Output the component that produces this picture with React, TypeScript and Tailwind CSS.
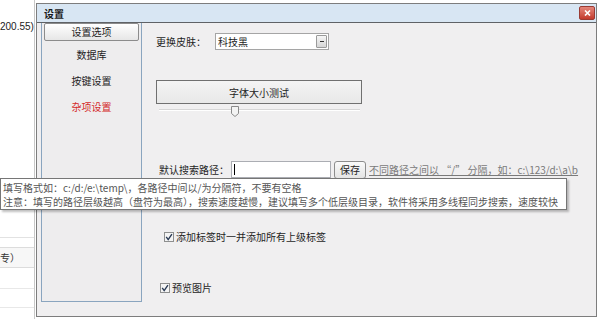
import React from "react";

function Check() {
  return (
    <svg width="10" height="10" viewBox="0 0 10 10" className="block">
      <rect x="0.5" y="0.5" width="9" height="9" fill="#f4f4f4" stroke="#8e8f8f" />
      <path d="M2.2 4.8 L4.2 7.6 L7.9 2.2" fill="none" stroke="#2a3a55" strokeWidth="1.4" />
    </svg>
  );
}

export default function App() {
  return (
    <div className="relative w-[600px] h-[319px] overflow-hidden bg-white font-['Noto_Sans_CJK_SC',sans-serif] text-[10px] text-[#1e1e1e]">
      {/* background page */}
      <div className="absolute left-0 top-[20px] text-[10px] leading-[14px] text-[#222] font-['Liberation_Sans',sans-serif]">200.55)</div>
      <div className="absolute left-0 top-[237px] w-[35px] border-t border-[#e2e2e2]" />
      <div className="absolute left-0 top-[247px] w-[35px] h-[21px] border-y border-[#dcdcdc] bg-[#f7f7f7] text-[10px] leading-[20px] text-[#333]">专）</div>
      <div className="absolute left-0 top-[288px] w-[35px] border-t border-[#e8e8e8]" />
      <div className="absolute left-0 top-[307px] w-[35px] border-t border-[#e8e8e8]" />
      <div className="absolute left-[34px] top-0 h-[319px] border-l border-[#c8c8c8]" />

      {/* dialog window */}
      <div className="absolute left-[36px] top-[3px] w-[561px] h-[314px] border border-[#7d7d7d] bg-[#f0eff0] flex flex-col">
        <div className="h-[19px] bg-[#d8e6f3] border-b border-[#5f6266] flex items-center justify-between pl-[7px] pr-[1px] shrink-0">
          <span className="font-bold text-[10px] text-[#1a1a1a]">设置</span>
          <div className="w-[16px] h-[14px] rounded-[2px] border border-[#9a3b33] bg-gradient-to-b from-[#e3857a] to-[#c3392c] flex items-center justify-center">
            <svg width="7" height="6" viewBox="0 0 7 6">
              <path d="M1 0.5 L6 5.5 M6 0.5 L1 5.5" stroke="#ffffff" strokeWidth="1.6" />
            </svg>
          </div>
        </div>
        <div className="flex flex-1 pl-[4px]">
          {/* left nav */}
          <div className="w-[101px] h-[279px] border border-[#8aa5bf] border-t-0 bg-[#eeedee] flex flex-col items-center shrink-0">
            <div className="w-[95px] h-[18px] rounded-[2px] border border-[#8c8c8c] bg-gradient-to-b from-[#ffffff] to-[#e6e6e6] flex items-center justify-center leading-none">
              设置选项
            </div>
            <div className="mt-[7px] h-[14px] leading-[14px]">数据库</div>
            <div className="mt-[12px] h-[14px] leading-[14px]">按键设置</div>
            <div className="mt-[12px] h-[14px] leading-[14px] text-[#d42a2a]">杂项设置</div>
          </div>

          {/* right content */}
          <div className="flex-1 flex flex-col">
            <div className="mt-[10px] ml-[14px] h-[17px] flex items-center">
              <span className="w-[59px]">更换皮肤：</span>
              <div className="w-[114px] h-[17px] border border-[#a5a5a5] bg-white flex items-center justify-between pl-[2px] pr-[1px]">
                <span className="leading-none">科技黑</span>
                <div className="w-[11px] h-[13px] border border-[#9a9a9a] rounded-[1px] bg-gradient-to-b from-[#f6f6f6] to-[#d6d6d6] flex items-center justify-center">
                  <div className="w-[4px] h-[1px] bg-[#333]" />
                </div>
              </div>
            </div>

            <div className="mt-[30px] ml-[14px] w-[206px] h-[24px] border border-[#707070] bg-gradient-to-b from-[#f4f4f4] to-[#e8e8e8] flex items-center justify-center">
              字体大小测试
            </div>

            <div className="mt-[2px] ml-[17px] w-[201px] h-[11px] relative">
              <div className="absolute left-0 right-0 top-[3px] h-[2px] bg-[#d6d6d6] border-b border-[#ffffff]" />
              <svg className="absolute left-[72px] top-0" width="8" height="11" viewBox="0 0 8 11">
                <path d="M0.5 0.5 H7.5 V7.5 L4 10.5 L0.5 7.5 Z" fill="#f3f3f3" stroke="#8a8a8a" />
              </svg>
            </div>

            <div className="mt-[44px] ml-[17px] h-[17px] flex items-center">
              <span className="w-[72px]">默认搜索路径：</span>
              <div className="w-[100px] h-[17px] border border-[#abadb3] bg-white flex items-center pl-[2px]">
                <div className="w-px h-[11px] bg-[#000]" />
              </div>
              <div className="ml-[3px] w-[32px] h-[18px] rounded-[3px] border border-[#8c8c8c] bg-gradient-to-b from-[#fafafa] to-[#e4e4e4] flex items-center justify-center">
                保存
              </div>
              <span className="ml-[3px] underline text-[#7a7a7a] whitespace-nowrap">不同路径之间以 “/” 分隔，如：c:\123/d:\a\b</span>
            </div>

            <div className="mt-[54px] ml-[22px] h-[10px] flex items-center">
              <Check />
              <span className="ml-[2px] leading-none">添加标签时一并添加所有上级标签</span>
            </div>

            <div className="mt-[40px] ml-[18px] h-[11px] flex items-center">
              <Check />
              <span className="ml-[2px] leading-none">预览图片</span>
            </div>
          </div>
        </div>
      </div>

      {/* tooltip */}
      <div className="absolute left-0 top-[178px] w-[567px] h-[32px] border border-[#767676] bg-white shadow-[2px_2px_2px_rgba(0,0,0,0.25)] pl-[2px] pt-[2px] text-[10px] leading-[14px] text-[#555] whitespace-nowrap">
        <div>填写格式如：c:/d:/e:\temp\，各路径中间以/为分隔符，不要有空格</div>
        <div>注意：填写的路径层级越高（盘符为最高），搜索速度越慢，建议填写多个低层级目录，软件将采用多线程同步搜索，速度较快</div>
      </div>
    </div>
  );
}
